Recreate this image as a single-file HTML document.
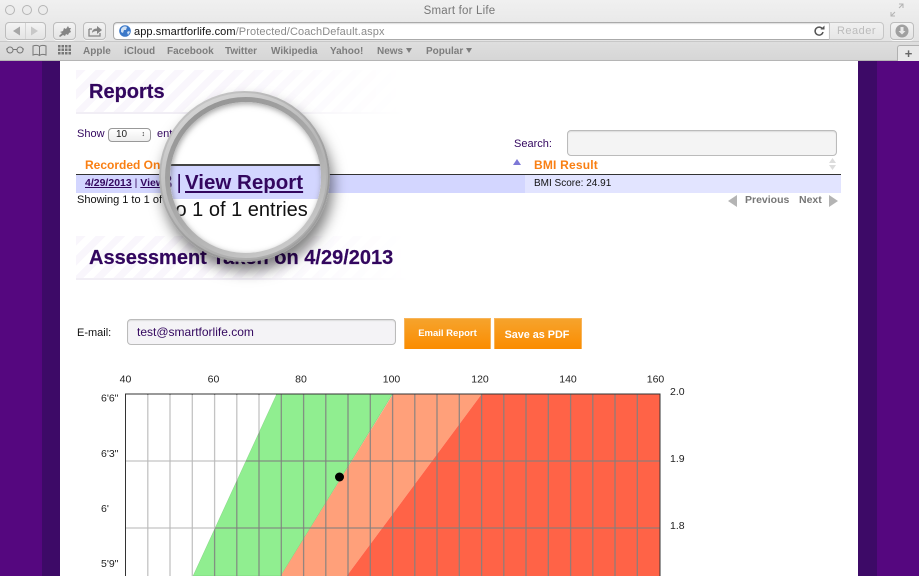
<!DOCTYPE html>
<html><head><meta charset="utf-8"><title>Smart for Life</title>
<style>
html,body{margin:0;padding:0;width:919px;height:576px;overflow:hidden;background:#fff}
body{position:relative;font-family:"Liberation Sans",sans-serif;filter:blur(.3px)}
.a{position:absolute;white-space:nowrap}
.bm{position:absolute;top:46px;font-size:10px;font-weight:bold;color:#7d7d7d;line-height:12px;white-space:nowrap}
.btn{position:absolute;box-sizing:border-box;border:1px solid #bdbdbd;border-radius:4px;background:linear-gradient(#f3f3f3,#e4e4e4);box-shadow:0 1px 0 #f8f8f8}
.head{position:absolute;left:76px;width:330px;height:44px;box-sizing:border-box;background:repeating-linear-gradient(135deg,#f9f6fc 0 7px,#fff 7px 14px);-webkit-mask-image:linear-gradient(90deg,#000 45%,transparent);mask-image:linear-gradient(90deg,#000 45%,transparent);border-bottom:2px solid #f1eef5}
h2{position:absolute;margin:0;font-size:20px;line-height:24px;color:#33075f;font-weight:bold;white-space:nowrap;-webkit-text-stroke:.2px #33075f}
.t{color:#33075f;font-size:11px;line-height:13px}
.o{position:absolute;box-sizing:border-box;top:318px;height:31px;background:linear-gradient(#f6a32c,#fb8c00);color:#fff;font-weight:bold;text-align:center;border:1px solid #f8b45a;border-bottom:0}
</style></head>
<body>
<!-- page background -->
<div class="a" style="left:0;top:61px;width:42px;height:515px;background:#55077f"></div>
<div class="a" style="left:42px;top:61px;width:18px;height:515px;background:#3d0a67"></div>
<div class="a" style="left:858px;top:61px;width:19px;height:515px;background:#3d0a67"></div>
<div class="a" style="left:877px;top:61px;width:42px;height:515px;background:#55077f"></div>

<!-- browser chrome -->
<div class="a" style="left:0;top:0;width:919px;height:42px;background:linear-gradient(#f0f0f0,#e3e3e3)"></div>
<div class="a" style="left:0;top:41px;width:919px;height:20px;background:linear-gradient(#dedede,#d6d6d6);border-top:1px solid #c8c8c8;box-sizing:border-box;border-bottom:1px solid #b5b5b5"></div>
<div class="a" style="left:0;top:4px;width:919px;text-align:center;font-size:11.500px;line-height:14px;color:#777;letter-spacing:.2px">Smart for Life</div>
<svg class="a" style="left:0;top:0" width="60" height="20"><g fill="#ececec" stroke="#b5b5b5"><circle cx="10" cy="10" r="4.500"/><circle cx="27" cy="10" r="4.500"/><circle cx="43" cy="10" r="4.500"/></g></svg>
<svg class="a" style="left:889px;top:3px" width="26" height="14"><g fill="none" stroke="#b3b3b3"><path d="M1 9v4h4M1 13l4-4M13 5V1H9M13 1L9 5" transform="translate(1,0)"/></g></svg>

<div class="btn" style="left:5px;top:22px;width:41px;height:18px"></div>
<div class="a" style="left:25px;top:23px;width:1px;height:16px;background:#d4d4d4"></div>
<svg class="a" style="left:5px;top:22px" width="41" height="18"><path d="M8 9l7-4.500v9z" fill="#a6a6a6"/><path d="M33 9l-7-4.500v9z" fill="#c8c8c8"/></svg>
<div class="btn" style="left:53px;top:22px;width:23px;height:18px"></div>
<svg class="a" style="left:53px;top:22px" width="23" height="18"><path d="M6 14l3-3-2-1 3-1 1-3 2 1 2-3 1 2 2 0-1 2 1 2-2 1-1 2-2-1-1 2-2-1-3 2z" fill="#858585"/></svg>
<div class="btn" style="left:83px;top:22px;width:23px;height:18px"></div>
<svg class="a" style="left:83px;top:22px" width="23" height="18"><path d="M6 7v7h11v-3M6 7h3" fill="none" stroke="#858585" stroke-width="1.300"/><path d="M9 11c0-3 2-4.500 5-4.500V4l5 4-5 4V9c-2 0-4 .5-5 2z" fill="#858585"/></svg>

<div class="a" style="left:113px;top:22px;width:716px;height:18px;box-sizing:border-box;background:#fff;border:1px solid #aaa;border-right:0;border-radius:4px 0 0 4px;box-shadow:inset 0 1px 1px #ddd"></div>
<div class="a" style="left:829px;top:22px;width:55px;height:18px;box-sizing:border-box;background:linear-gradient(#f0f0f0,#e6e6e6);border:1px solid #c6c6c6;border-radius:0 4px 4px 0;text-align:center;font-size:11px;line-height:16px;color:#bcbcbc;letter-spacing:.5px">Reader</div>
<svg class="a" style="left:117px;top:23px" width="16" height="16"><circle cx="8" cy="8" r="5.800" fill="#3b78c8"/><path d="M4 6c2-3 4-3 6-2l-1 3-2 0-1 3-2-1z M10 9l2-1 1 1-2 3z" fill="#cfe0f3"/></svg>
<div class="a" style="left:134px;top:24.500px;font-size:11px;line-height:14px;color:#111;letter-spacing:.1px">app.smartforlife.com<span style="color:#8b8b8b">/Protected/CoachDefault.aspx</span></div>
<svg class="a" style="left:812px;top:24px" width="14" height="14"><path d="M10.500 5a4 4 0 1 0 .5 3" fill="none" stroke="#555" stroke-width="1.500"/><path d="M8.500 5.500h4v-4z" fill="#555"/></svg>
<div class="btn" style="left:890px;top:22px;width:24px;height:18px"></div>
<svg class="a" style="left:890px;top:22px" width="24" height="18"><circle cx="12" cy="9" r="6.500" fill="#a0a0a0"/><path d="M10.500 5h3v4h2l-3.500 3.500L8.500 9h2z" fill="#e8e8e8"/></svg>

<svg class="a" style="left:5px;top:42px" width="70" height="16"><g fill="none" stroke="#777" stroke-width="1"><circle cx="5" cy="8" r="3"/><circle cx="15" cy="8" r="3"/><path d="M8 7.500h4M2 7l-1 0M18 7l1 0"/><path d="M28 4c3-1 5-1 6.500.5C36 3 38 3 41 4v9c-3-1-5-1-6.500 .5C33 12 31 12 28 13zM34.500 4.500v9"/></g><g fill="#777"><rect x="53" y="3" width="2.500" height="2.500"/><rect x="56.500" y="3" width="2.500" height="2.500"/><rect x="60" y="3" width="2.500" height="2.500"/><rect x="63.500" y="3" width="2.500" height="2.500"/><rect x="53" y="6.500" width="2.500" height="2.500"/><rect x="56.500" y="6.500" width="2.500" height="2.500"/><rect x="60" y="6.500" width="2.500" height="2.500"/><rect x="63.500" y="6.500" width="2.500" height="2.500"/><rect x="53" y="10" width="2.500" height="2.500"/><rect x="56.500" y="10" width="2.500" height="2.500"/><rect x="60" y="10" width="2.500" height="2.500"/><rect x="63.500" y="10" width="2.500" height="2.500"/></g></svg>
<div class="bm" style="left:83px">Apple</div>
<div class="bm" style="left:124px">iCloud</div>
<div class="bm" style="left:167px">Facebook</div>
<div class="bm" style="left:225px">Twitter</div>
<div class="bm" style="left:271px">Wikipedia</div>
<div class="bm" style="left:330px">Yahoo!</div>
<div class="bm" style="left:377px">News</div>
<svg class="a" style="left:406px;top:48px" width="8" height="7"><path d="M0 0h6l-3 5z" fill="#7d7d7d"/></svg>
<div class="bm" style="left:426px">Popular</div>
<svg class="a" style="left:466px;top:48px" width="8" height="7"><path d="M0 0h6l-3 5z" fill="#7d7d7d"/></svg>
<div class="a" style="left:897px;top:45px;width:22px;height:16px;box-sizing:border-box;background:#e8e8e8;border:1px solid #b0b0b0;border-right:0;border-bottom:0;border-radius:3px 0 0 0;text-align:center;font-size:13px;line-height:15px;color:#666;font-weight:bold">+</div>

<!-- Reports -->
<div class="head" style="top:70px"></div>
<h2 style="left:89px;top:80px">Reports</h2>
<div class="a t" style="left:77px;top:128px">Show</div>
<div class="a" style="left:108px;top:128px;width:43px;height:14px;box-sizing:border-box;border:1px solid #999;border-radius:4px;background:linear-gradient(#fff,#eee);font-size:10px;line-height:12px;padding-left:7px;color:#222">10<span style="position:absolute;right:5px;top:0;font-size:7px;line-height:12px">&#8597;</span></div>
<div class="a t" style="left:157px;top:128px">entries</div>
<div class="a t" style="left:514px;top:138px">Search:</div>
<div class="a" style="left:567px;top:130px;width:270px;height:26px;box-sizing:border-box;border:1px solid #bbb;border-radius:4px;background:#f4f4f4;box-shadow:inset 0 1px 1px #ddd"></div>

<div class="a" style="left:85px;top:158px;font-size:12px;line-height:14px;font-weight:bold;color:#f97f13">Recorded On</div>
<div class="a" style="left:534px;top:158px;font-size:12px;line-height:14px;font-weight:bold;color:#f97f13;letter-spacing:.2px">BMI Result</div>
<svg class="a" style="left:513px;top:158px" width="10" height="8"><path d="M0 7l4-6 4 6z" fill="#7d78d6"/></svg>
<svg class="a" style="left:828px;top:158px" width="10" height="14"><path d="M1 5l3.500-5L8 5zM1 7h7l-3.500 5z" fill="#dcdcdc"/></svg>
<div class="a" style="left:76px;top:174px;width:765px;height:1px;background:#333"></div>
<div class="a" style="left:76px;top:175px;width:449px;height:18px;background:#d3d6ff"></div>
<div class="a" style="left:525px;top:175px;width:316px;height:18px;background:#e2e4ff"></div>
<div class="a" style="left:85px;top:177px;font-size:10.500px;line-height:13px;font-weight:bold;color:#33075f"><u>4/29/2013</u> <span style="font-weight:normal">|</span> <u>View Report</u></div>
<div class="a" style="left:534px;top:177px;font-size:10px;line-height:13px;color:#111">BMI Score: 24.91</div>
<div class="a" style="left:77px;top:193px;font-size:11px;line-height:14px;color:#111">Showing 1 to 1 of 1 entries</div>
<svg class="a" style="left:728px;top:195px" width="10" height="12"><path d="M9 0v12L0 6z" fill="#b4b4b4"/></svg>
<div class="a" style="left:745px;top:193px;font-size:10.500px;line-height:14px;font-weight:bold;color:#777">Previous</div>
<div class="a" style="left:799px;top:193px;font-size:10.500px;line-height:14px;font-weight:bold;color:#777">Next</div>
<svg class="a" style="left:828px;top:195px" width="10" height="12"><path d="M1 0v12L10 6z" fill="#b4b4b4"/></svg>

<!-- Assessment -->
<div class="head" style="top:236px;width:335px"></div>
<h2 style="left:89px;top:246px">Assessment Taken on 4/29/2013</h2>
<div class="a" style="left:77px;top:326px;font-size:11px;line-height:14px;color:#111">E-mail:</div>
<div class="a" style="left:127px;top:319px;width:269px;height:26px;box-sizing:border-box;border:1px solid #bbb;border-radius:4px;background:#f4f3f6;box-shadow:inset 0 1px 1px #ddd;font-size:12px;line-height:24px;padding-left:9px;color:#33075f">test@smartforlife.com</div>
<div class="o" style="left:404px;width:87px;font-size:9.500px;line-height:29px">Email Report</div>
<div class="o" style="left:494px;width:88px;font-size:10.800px;line-height:33px;padding-right:2px">Save as PDF</div>

<!-- Chart -->
<svg class="a" style="left:90px;top:370px" width="620" height="206" font-family="'Liberation Sans',sans-serif" font-size="10.500" fill="#222">
<polygon points="186.700,24 302.500,24 190.700,206 103,206" fill="#90ee90" stroke="#72c872" stroke-width=".5"/>
<polygon points="303,24 391.700,24 256.700,206 190.700,206" fill="#ffa07a"/>
<polygon points="391.700,24 570,24 570,206 256.700,206" fill="#ff6347"/>
<g stroke="#808080" stroke-opacity=".85" stroke-width="1.300">
<path d="M35.500 91H570M35.500 158H570"/>
<path d="M57.800 24v182M80 24v182M102.300 24v182M124.600 24v182M146.800 24v182M169 24v182M191.300 24v182M213.600 24v182M235.800 24v182M258 24v182M280.300 24v182M302.600 24v182M324.800 24v182M347 24v182M369.300 24v182M391.600 24v182M413.800 24v182M436 24v182M458.300 24v182M480.600 24v182M502.800 24v182M525 24v182M547.300 24v182"/>
</g>
<polygon points="36,25 186.300,25 103,206 36,206" fill="#fff" fill-opacity=".45"/>
<path d="M35.500 206V24H570V206" fill="none" stroke="#333" stroke-width="1"/>
<circle cx="249.500" cy="107" r="4.500" fill="#000"/>
<g text-anchor="middle"><text x="35.500" y="12.500">40</text><text x="123.500" y="12.500">60</text><text x="211" y="12.500">80</text><text x="301.500" y="12.500">100</text><text x="390" y="12.500">120</text><text x="478" y="12.500">140</text><text x="565.500" y="12.500">160</text></g>
<text x="11" y="31.500">6'6"</text><text x="11" y="87">6'3"</text><text x="11" y="142">6'</text><text x="11" y="197">5'9"</text>
<text x="580" y="25">2.0</text><text x="580" y="92">1.9</text><text x="580" y="159">1.8</text>
</svg>

<!-- Magnifier -->
<div class="a" style="left:159px;top:91px;width:171px;height:171px;border-radius:50%;background:linear-gradient(150deg,#d0d0d0 0%,#b0b0b0 35%,#989898 70%,#a8a8a8 100%);box-shadow:3px 9px 14px rgba(0,0,0,.5)"></div>
<div class="a" style="left:161px;top:93px;width:167px;height:167px;border-radius:50%;background:linear-gradient(150deg,#dcdcdc,#b8b8b8 50%,#a6a6a6)"></div>
<div class="a" style="left:165px;top:97px;width:161px;height:161px;border-radius:50%;background:linear-gradient(150deg,#8f8f8f,#adadad 55%,#d4d4d4)"></div>
<div class="a" style="left:170px;top:102px;width:151px;height:151px;border-radius:50%;overflow:hidden;background:#fff">
  <div class="a" style="left:0;top:62px;width:151px;height:2px;background:#444"></div>
  <div class="a" style="left:0;top:64px;width:151px;height:33px;background:#d3d6ff"></div>
  <div class="a" style="left:-9px;top:68px;font-size:20.500px;line-height:25px;font-weight:bold;color:#33075f">3</div>
  <div class="a" style="left:6.500px;top:68px;font-size:20.500px;line-height:25px;font-weight:normal;color:#33075f">|</div>
  <div class="a" style="left:15px;top:68px;font-size:20.500px;line-height:25px;font-weight:bold;color:#33075f"><u>View Report</u></div>
  <div class="a" style="left:5.500px;top:97px;font-size:20px;line-height:22px;color:#111">o 1 of 1 entries</div>
  <div class="a" style="left:0;top:0;width:151px;height:151px;border-radius:50%;box-shadow:inset 1px 2px 6px rgba(90,90,90,.55)"></div>
</div>
</body></html>
